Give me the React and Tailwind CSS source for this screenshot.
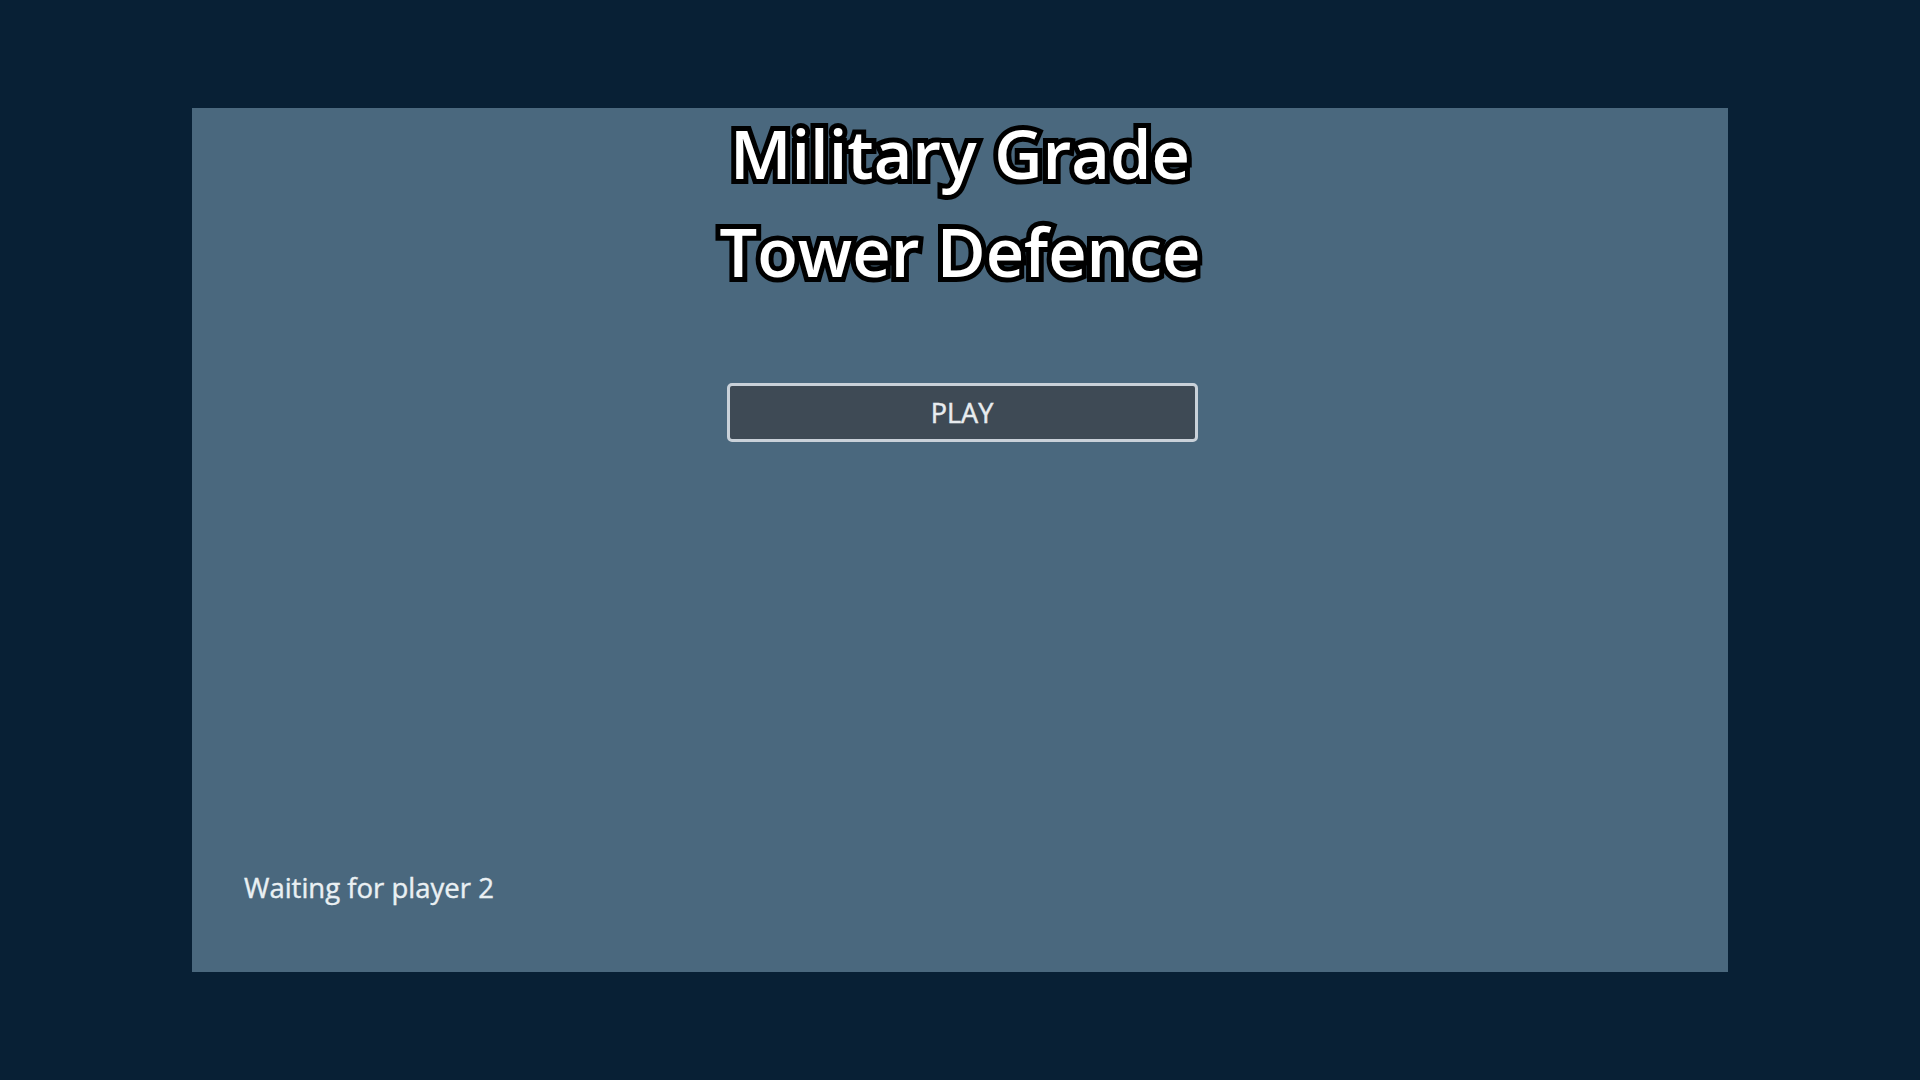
export default function App() {
  return (
    <div className="w-[1920px] h-[1080px] bg-[#082035] flex items-center justify-center font-['Open_Sans',sans-serif]">
      <div className="w-[1536px] h-[864px] bg-[#4a687e] flex flex-col items-center">
        <h1 className="mt-[-3px] text-[66.7px] leading-[98px] font-semibold text-white text-center [paint-order:stroke_fill] [-webkit-text-stroke:10px_#000]">
          Military Grade
          <br />
          Tower Defence
        </h1>
        <button className="mt-[82px] ml-[4px] w-[471px] h-[59px] bg-[#3e4a55] border-[3px] border-[#c9d1d9] rounded-[5px] text-[27px] font-normal [-webkit-text-stroke:0.5px_#e8ecef] text-[#e8ecef] flex items-center justify-center leading-none">
          PLAY
        </button>
        <div className="flex-1" />
        <div className="self-start pl-[52px] pb-[66px] text-[27.5px] leading-[36px] font-normal [-webkit-text-stroke:0.4px_#eaf0f3] text-[#eaf0f3]">
          Waiting for player 2
        </div>
      </div>
    </div>
  );
}
